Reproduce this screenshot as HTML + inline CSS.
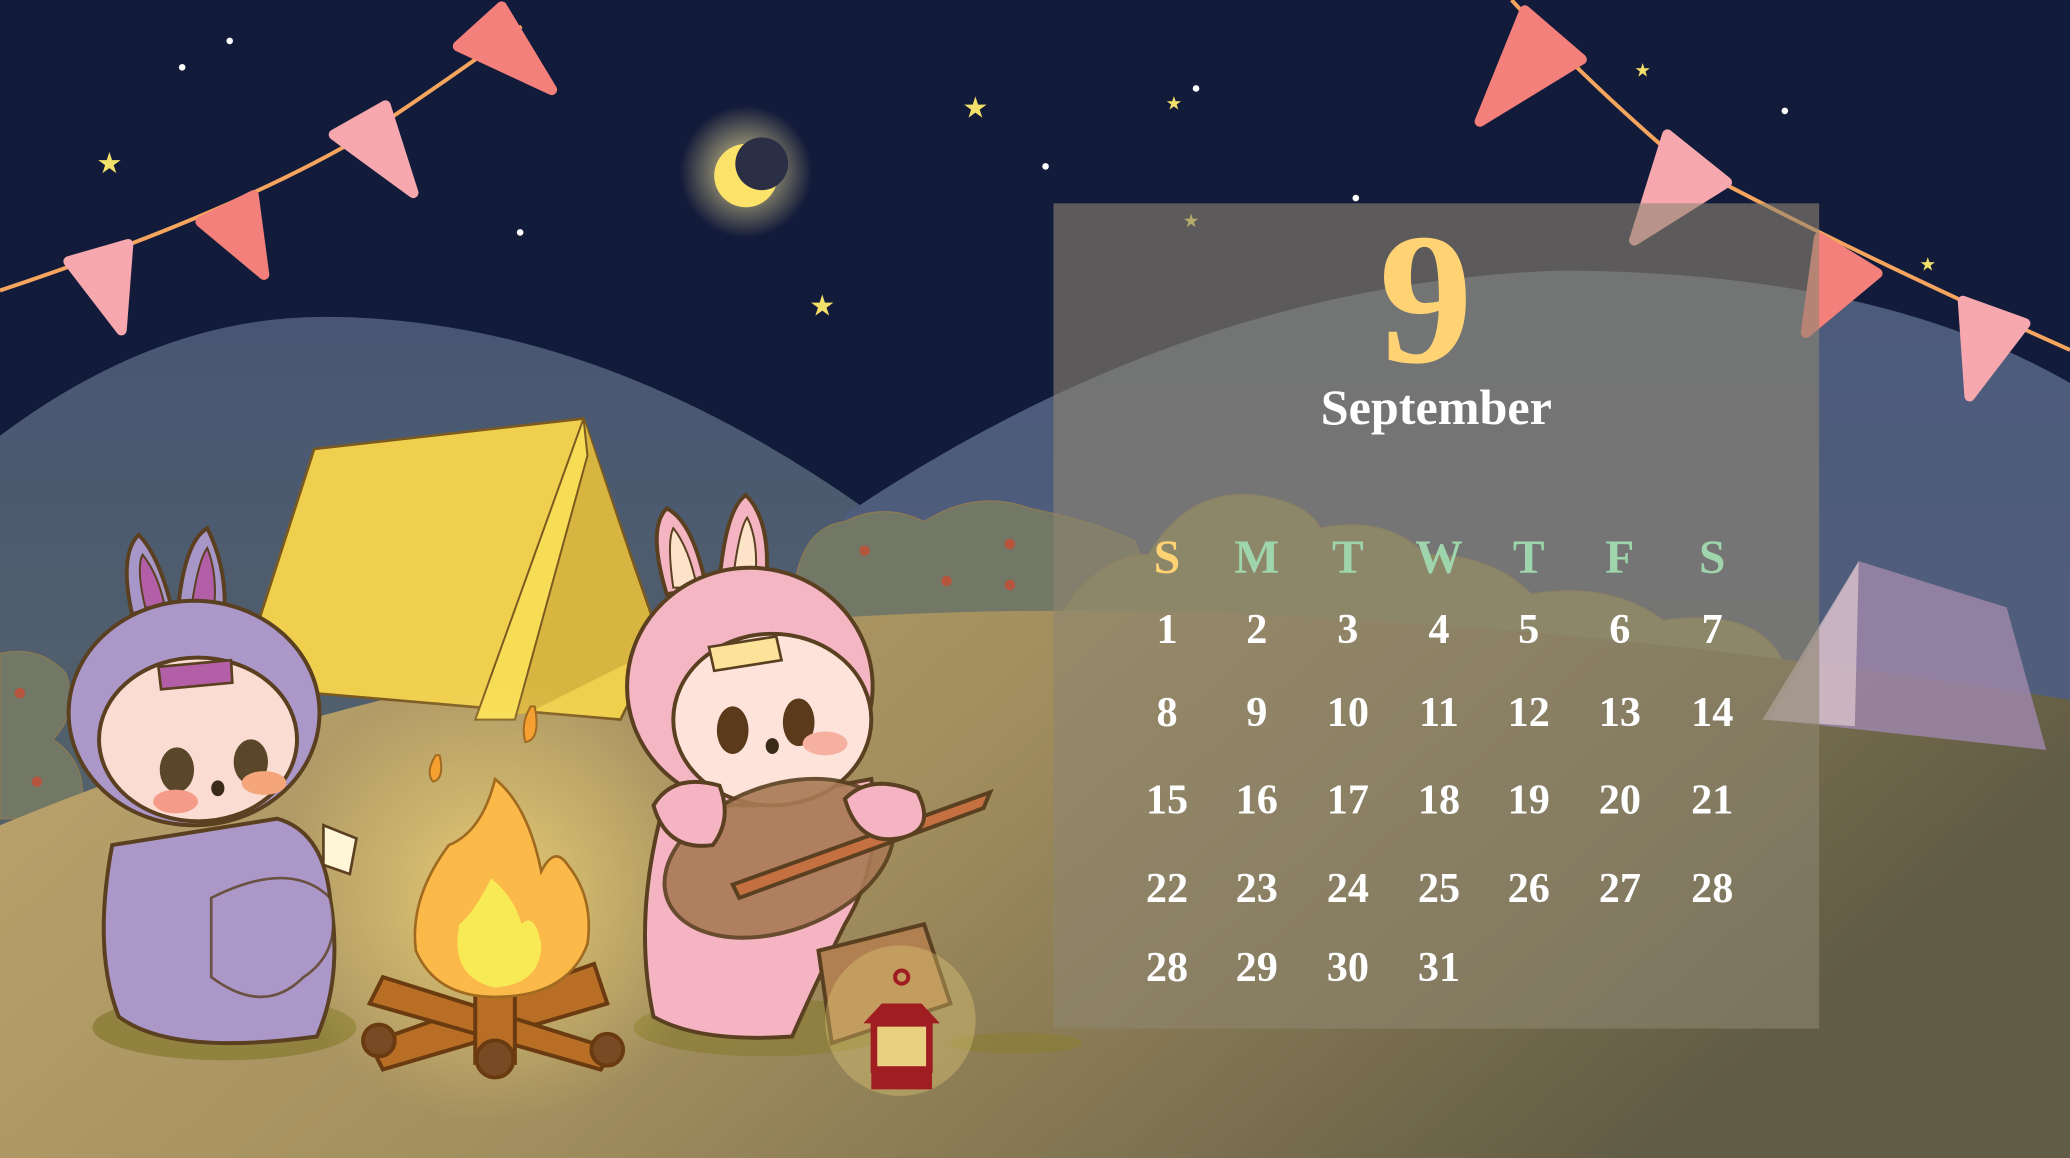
<!DOCTYPE html>
<html><head><meta charset="utf-8"><style>
html,body{margin:0;padding:0;background:#141c3b;overflow:hidden}
svg{display:block}
</style></head><body>
<svg width="2070" height="1158" viewBox="0 0 1568 877" preserveAspectRatio="none" xmlns="http://www.w3.org/2000/svg">
<defs>
<linearGradient id="hl" x1="0" y1="0" x2="0" y2="1"><stop offset="0" stop-color="#485674"/><stop offset="1" stop-color="#5b6a62"/></linearGradient>
<linearGradient id="hr" x1="0" y1="0" x2="0" y2="1"><stop offset="0" stop-color="#4c5a7c"/><stop offset="1" stop-color="#56627a"/></linearGradient>
<linearGradient id="gr" x1="0" y1="0" x2="1" y2="0.3"><stop offset="0" stop-color="#bda56d"/><stop offset="0.5" stop-color="#a28e5e"/><stop offset="1" stop-color="#615c45"/></linearGradient>
<radialGradient id="moon"><stop offset="0.3" stop-color="#fff0a0" stop-opacity="0.6"/><stop offset="1" stop-color="#fff0a0" stop-opacity="0"/></radialGradient>
<radialGradient id="fire"><stop offset="0" stop-color="#ffe27a" stop-opacity="0.7"/><stop offset="1" stop-color="#ffe27a" stop-opacity="0"/></radialGradient>
</defs>
<rect width="1568" height="877" fill="#131b3a"/>
<g fill="#fff"><circle cx="138" cy="51" r="2.5"/><circle cx="174" cy="31" r="2.5"/><circle cx="394" cy="176" r="2.5"/><circle cx="792" cy="126" r="2.5"/><circle cx="906" cy="67" r="2.5"/><circle cx="1027" cy="150" r="2.5"/><circle cx="1352" cy="84" r="2.5"/></g>
<g fill="#f3e06a" font-size="22" font-family="DejaVu Sans"><text x="73" y="131">★</text><text x="729" y="89">★</text><text x="613" y="239">★</text><text x="883" y="83" font-size="14">★</text><text x="1238" y="58" font-size="14">★</text><text x="1454" y="205" font-size="14">★</text><text x="896" y="172" font-size="14">★</text></g>
<circle cx="565" cy="130" r="50" fill="url(#moon)"/>
<circle cx="565" cy="133" r="24" fill="#fbe36a"/><circle cx="577" cy="124" r="20" fill="#2a2f45"/>
<path d="M0,330 Q120,240 245,240 Q450,240 655,385 L655,877 L0,877Z" fill="url(#hl)"/>
<path d="M640,390 Q900,215 1180,205 Q1420,205 1568,290 L1568,877 L640,877Z" fill="url(#hr)"/>
<g fill="#727766" stroke="#8a7a55" stroke-width="1">
<path d="M600,470 Q600,400 640,395 Q670,380 700,395 Q740,370 780,385 Q830,395 860,410 L880,470Z"/>
<path d="M0,620 L0,495 Q30,488 50,510 Q60,540 40,560 Q70,580 60,620Z"/>
<path d="M800,470 Q830,420 870,420 Q900,370 950,375 Q990,380 1000,400 Q1050,390 1080,420 Q1130,420 1160,450 Q1220,440 1260,470 Q1330,460 1350,500 L1350,520 L800,520Z" fill="#8c8a63"/>
</g>
<g fill="#b5553e"><circle cx="655" cy="417" r="4"/><circle cx="717" cy="440" r="4"/><circle cx="765" cy="412" r="4"/><circle cx="765" cy="443" r="4"/><circle cx="15" cy="525" r="4"/><circle cx="28" cy="592" r="4"/></g>
<path d="M0,625 Q250,520 600,470 Q1000,440 1568,530 L1568,877 L0,877Z" fill="url(#gr)"/>
<path d="M180,520 L238,340 L442,317 L500,485 L470,545 Z" fill="#f0cf4e" stroke="#7a5a20" stroke-width="2"/>
<path d="M442,317 L500,490 L400,540 L360,545Z" fill="#d8b440"/>
<path d="M442,317 L360,545 L390,545 L445,345Z" fill="#f7dd55" stroke="#7a5a20" stroke-width="1.5"/>
<path d="M1340,545 L1408,425 L1520,460 L1550,568 Z" fill="#9c86a8" opacity="0.85"/>
<path d="M1408,425 L1335,545 L1405,550 Z" fill="#d6c0c8" opacity="0.8"/>
<ellipse cx="170" cy="778" rx="100" ry="25" fill="#8a7d36" opacity="0.8"/>
<ellipse cx="580" cy="778" rx="100" ry="22" fill="#8a7d36" opacity="0.7"/>
<ellipse cx="770" cy="790" rx="50" ry="8" fill="#8a7d36" opacity="0.7"/>
<circle cx="375" cy="680" r="170" fill="url(#fire)"/>
<g stroke="#5a4020" stroke-width="3">
<path d="M100,465 Q90,420 105,405 Q120,420 130,460Z M135,460 Q140,410 157,400 Q172,430 170,465Z" fill="#a797c8"/>
<path d="M110,460 Q103,430 108,420 Q120,435 125,460Z M145,460 Q150,425 157,415 Q165,435 162,462Z" fill="#b25fa8" stroke-width="1.5"/>
<path d="M85,640 Q70,720 90,770 Q130,800 240,785 Q260,740 250,680 Q245,630 210,620 Z" fill="#ab98c8"/>
<ellipse cx="147" cy="540" rx="95" ry="85" fill="#ab98c8"/>
<ellipse cx="150" cy="560" rx="75" ry="62" fill="#fbdcd2"/>
<path d="M120,505 L175,500 L176,517 L122,522Z" fill="#b25fa8" stroke-width="2"/>
<path d="M160,680 Q220,650 250,680 Q260,720 230,740 Q200,770 160,740Z" fill="#ab98c8" opacity="0.8" stroke-width="2"/>
<path d="M245,625 L270,635 L265,662 L245,655Z" fill="#fff6d8" stroke-width="2"/>
</g>
<ellipse cx="134" cy="583" rx="13" ry="17" fill="#5a4628"/><ellipse cx="190" cy="577" rx="13" ry="17" fill="#5a4628"/>
<ellipse cx="165" cy="597" rx="5" ry="6" fill="#3a2a18"/>
<ellipse cx="133" cy="607" rx="17" ry="9" fill="#f59b8a"/><ellipse cx="200" cy="593" rx="17" ry="9" fill="#f5a57a"/>
<g stroke="#6a3a10" stroke-width="3">
<path d="M280,790 L450,730 L460,760 L290,810Z" fill="#b86f25"/>
<path d="M290,740 L465,795 L455,810 L280,760Z" fill="#b86f25"/>
<rect x="360" y="740" width="30" height="65" fill="#b86f25"/>
<circle cx="287" cy="788" r="12" fill="#7a4a25"/><circle cx="460" cy="795" r="12" fill="#7a4a25"/><circle cx="375" cy="802" r="14" fill="#7a4a25"/>
</g>
<path d="M375,590 Q365,630 340,640 Q310,680 315,720 Q330,755 375,755 Q430,755 445,715 Q450,680 430,655 Q420,640 410,660 Q400,610 375,590Z" fill="#fbb94a" stroke="#a06a20" stroke-width="2"/>
<path d="M372,665 Q360,690 348,700 Q340,740 375,748 Q410,745 410,715 Q405,690 395,700 Q390,680 372,665Z" fill="#f7ea55"/>
<path d="M330,572 Q322,585 328,592 Q337,590 333,572Z M402,535 Q394,548 398,562 Q410,560 405,535Z" fill="#f5a030" stroke="#a06a20" stroke-width="1.5"/>
<g stroke="#5a4020" stroke-width="3">
<path d="M505,450 Q490,400 505,385 Q525,395 535,445Z M545,440 Q550,385 565,375 Q585,395 580,445Z" fill="#f4b4c2"/>
<path d="M510,445 Q505,410 510,400 Q522,415 528,445Z M555,440 Q560,400 566,392 Q575,410 572,440Z" fill="#fde3c8" stroke-width="1.5"/>
<path d="M500,620 Q480,700 495,770 Q530,790 600,785 Q620,740 640,700 Q670,650 660,590 Z" fill="#f4b4c2"/>
<ellipse cx="568" cy="520" rx="93" ry="90" fill="#f5b6c4"/>
<ellipse cx="585" cy="545" rx="75" ry="65" fill="#fde3da"/>
<path d="M537,490 L588,482 L592,500 L541,508Z" fill="#fde39a" stroke-width="2"/>
<ellipse cx="590" cy="650" rx="90" ry="55" transform="rotate(-20 590 650)" fill="#a87a55" opacity="0.9"/>
<path d="M555,670 L750,600 L745,612 L560,680Z" fill="#c47040"/>
<path d="M620,720 L700,700 L720,760 L630,790Z" fill="#b08050"/>
<path d="M495,610 Q510,585 545,595 Q555,620 540,640 Q505,645 495,610Z M640,605 Q660,585 695,600 Q710,630 680,635 Q650,640 640,605Z" fill="#f4b4c2"/>
</g>
<ellipse cx="555" cy="553" rx="12" ry="18" fill="#5a3a1a"/><ellipse cx="605" cy="547" rx="12" ry="18" fill="#5a3a1a"/>
<ellipse cx="585" cy="565" rx="5" ry="6" fill="#3a2a18"/>
<ellipse cx="625" cy="563" rx="17" ry="9" fill="#f5b0a0"/>
<circle cx="682" cy="773" r="57" fill="#e9d27a" opacity="0.35"/>
<path d="M668,760 L698,760 L712,775 L654,775Z" fill="#a01d22"/>
<rect x="662" y="775" width="42" height="35" fill="#e8d080" stroke="#a01d22" stroke-width="5"/>
<rect x="660" y="810" width="46" height="15" fill="#a01d22"/>
<circle cx="683" cy="740" r="5" fill="none" stroke="#a01d22" stroke-width="3"/>
<path d="M0,220 Q180,160 280,100 Q340,60 395,20 M1145,0 Q1200,60 1270,120 Q1400,190 1568,265" fill="none" stroke="#f5a55e" stroke-width="3"/>
<g stroke-linejoin="round" stroke-width="8">
<path d="M52,198 L97,185 L92,250Z" fill="#f6a8ae" stroke="#f6a8ae"/>
<path d="M152,168 L192,148 L200,208Z" fill="#f3807a" stroke="#f3807a"/>
<path d="M253,102 L292,80 L313,146Z" fill="#f6a8ae" stroke="#f6a8ae"/>
<path d="M347,35 L380,5 L418,68Z" fill="#f3807a" stroke="#f3807a"/>
<path d="M1155,8 L1198,45 L1121,92Z" fill="#f3807a" stroke="#f3807a"/>
<path d="M1263,102 L1308,138 L1238,182Z" fill="#f6a8ae" stroke="#f6a8ae"/>
<path d="M1378,180 L1422,207 L1368,252Z" fill="#f3807a" stroke="#f3807a"/>
<path d="M1487,228 L1534,245 L1492,300Z" fill="#f6a8ae" stroke="#f6a8ae"/>
</g>
<rect x="798" y="154" width="580" height="625" fill="#8d866f" fill-opacity="0.6"/>
<text x="1080" y="274" text-anchor="middle" font-family="Liberation Serif, serif" font-weight="bold" font-size="142" fill="#ffd374">9</text>
<text x="1088" y="321" text-anchor="middle" font-family="Liberation Serif, serif" font-weight="bold" font-size="38" fill="#fff">September</text>
<g font-family="Liberation Serif, serif" font-weight="bold" font-size="36" text-anchor="middle" fill="#9fd5ac">
<text x="884" y="434" fill="#ffd374">S</text><text x="952" y="434">M</text><text x="1021" y="434">T</text><text x="1090" y="434">W</text><text x="1158" y="434">T</text><text x="1227" y="434">F</text><text x="1297" y="434">S</text>
</g>
<g font-family="Liberation Serif, serif" font-weight="bold" font-size="32" text-anchor="middle" fill="#fff">
<text x="884" y="487">1</text><text x="952" y="487">2</text><text x="1021" y="487">3</text><text x="1090" y="487">4</text><text x="1158" y="487">5</text><text x="1227" y="487">6</text><text x="1297" y="487">7</text>
<text x="884" y="550">8</text><text x="952" y="550">9</text><text x="1021" y="550">10</text><text x="1090" y="550">11</text><text x="1158" y="550">12</text><text x="1227" y="550">13</text><text x="1297" y="550">14</text>
<text x="884" y="616">15</text><text x="952" y="616">16</text><text x="1021" y="616">17</text><text x="1090" y="616">18</text><text x="1158" y="616">19</text><text x="1227" y="616">20</text><text x="1297" y="616">21</text>
<text x="884" y="683">22</text><text x="952" y="683">23</text><text x="1021" y="683">24</text><text x="1090" y="683">25</text><text x="1158" y="683">26</text><text x="1227" y="683">27</text><text x="1297" y="683">28</text>
<text x="884" y="743">28</text><text x="952" y="743">29</text><text x="1021" y="743">30</text><text x="1090" y="743">31</text>
</g>
</svg>
</body></html>
